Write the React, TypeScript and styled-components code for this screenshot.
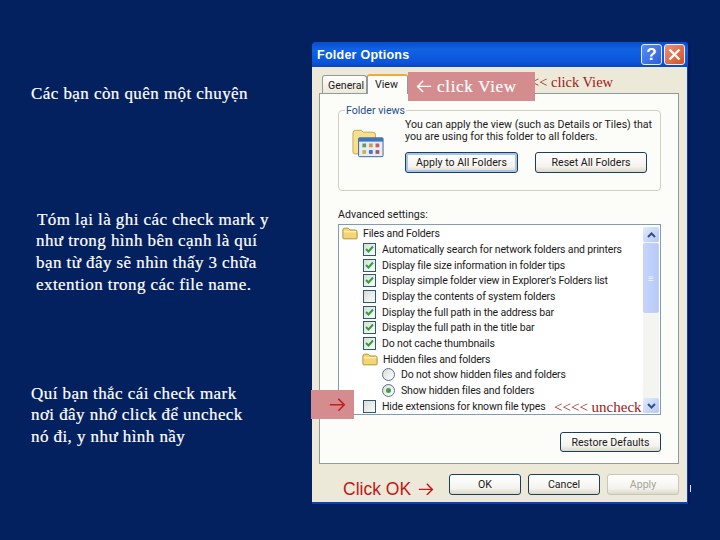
import React from 'react'
import styled, { createGlobalStyle } from 'styled-components'

const GlobalStyle = createGlobalStyle`
  html, body { margin: 0; padding: 0; background: #03205f; }
`

const Page = styled.div`
  width: 720px;
  height: 540px;
  overflow: hidden;
  display: flex;
  background: #03205f;
`

const LeftColumn = styled.div`
  width: 312px;
  flex: none;
  display: flex;
  flex-direction: column;
  padding: 83px 0 0 31px;
  box-sizing: border-box;
  font-family: "Liberation Serif", serif;
  font-size: 17px;
  line-height: 21.7px;
  color: #fff;
  letter-spacing: 0.43px;
  -webkit-text-stroke: 0.2px #fff;
`

const Para = styled.p<{ $top: number; $indent?: number }>`
  margin: ${p => p.$top}px 0 0 ${p => p.$indent ?? 0}px;
  white-space: pre-line;
`

const Window = styled.div`
  position: relative;
  margin-top: 42px;
  width: 378px;
  height: 462px;
  flex: none;
  display: flex;
  flex-direction: column;
  box-sizing: border-box;
  background: #0b3fb8;
  border-right: 2px solid #03165f;
  border-radius: 4px 4px 0 0;
  font-family: Roboto, "Liberation Sans", sans-serif;
  font-size: 10.6px;
  color: #1a1a1a;
`

const TitleBar = styled.div`
  height: 25px;
  flex: none;
  display: flex;
  align-items: center;
  padding: 0 3px 0 5px;
  gap: 2px;
  background: linear-gradient(#0a4ccc, #1162e4 30%, #0b55da 80%, #0a47c0);
  border-radius: 4px 4px 0 0;
`

const Title = styled.span`
  flex: 1;
  font-family: "Liberation Sans", sans-serif;
  font-weight: bold;
  font-size: 12.5px;
  color: #fff;
  letter-spacing: 0.25px;
`

const CapButton = styled.div<{ $close?: boolean }>`
  width: 21px;
  height: 21px;
  box-sizing: border-box;
  border: 1px solid #e8eefc;
  border-radius: 3px;
  display: flex;
  align-items: center;
  justify-content: center;
  color: #fff;
  font-family: "Liberation Sans", sans-serif;
  font-weight: bold;
  font-size: 17px;
  background: ${p => (p.$close ? 'linear-gradient(135deg, #e8937a, #d4501f)' : 'linear-gradient(135deg, #5a8cf0, #2a5fdc)')};
`

const Body = styled.div`
  flex: 1;
  margin: 0 1px 2px 0;
  padding: 6px 8px 0 7px;
  background: #ece9d8;
  display: flex;
  flex-direction: column;
  min-height: 0;
`

const Tabs = styled.div`
  height: 20px;
  flex: none;
  display: flex;
  align-items: flex-end;
  padding-left: 3px;
`

const Tab = styled.div<{ $active?: boolean }>`
  box-sizing: border-box;
  height: ${p => (p.$active ? 20 : 18)}px;
  padding: ${p => (p.$active ? '2px 0 0 7px' : '3px 0 0 5px')};
  width: ${p => (p.$active ? 41 : 45)}px;
  border: 1px solid #919b9c;
  border-bottom: none;
  border-radius: 3px 3px 0 0;
  background: ${p => (p.$active ? '#fcfcf9' : 'linear-gradient(#fff, #ece9d8)')};
  border-top: ${p => (p.$active ? '2px solid #f2a83a' : '1px solid #919b9c')};
  margin-bottom: ${p => (p.$active ? -1 : 0)}px;
  position: relative;
  white-space: nowrap;
`

const Panel = styled.div`
  height: 371px;
  flex: none;
  box-sizing: border-box;
  border: 1px solid #919b9c;
  background: #fcfcf9;
  padding: 11px 17px 0 18px;
  display: flex;
  flex-direction: column;
`

const Group = styled.fieldset`
  margin: 0;
  height: 86px;
  flex: none;
  box-sizing: border-box;
  border: 1px solid #d0d0bf;
  border-radius: 4px;
  padding: 0 0 0 13px;
  display: flex;
  gap: 21px;
  min-width: 0;
`

const Legend = styled.legend`
  margin-left: -7px;
  padding: 0 1px;
  color: #1c4f8c;
  line-height: 11px;
`

const GroupIcon = styled.div`
  padding-top: 12px;
  flex: none;
`

const GroupMain = styled.div`
  display: flex;
  flex-direction: column;
`

const GroupText = styled.div`
  line-height: 12px;
  margin-top: 3px;
  white-space: nowrap;
`

const GroupButtons = styled.div`
  display: flex;
  gap: 17px;
  margin-top: 9px;
`

const Btn = styled.div<{ $w: number; $h?: number; $default?: boolean; $disabled?: boolean }>`
  width: ${p => p.$w}px;
  height: ${p => p.$h ?? 21}px;
  box-sizing: border-box;
  flex: none;
  border: 1px solid ${p => (p.$disabled ? '#c9c7ba' : '#1a3f5c')};
  border-radius: 3px;
  display: flex;
  align-items: center;
  justify-content: center;
  background: linear-gradient(#fff, #f4f3ee 70%, #dcd8c8);
  color: ${p => (p.$disabled ? '#a6a594' : '#1a1a1a')};
  box-shadow: ${p => (p.$default ? 'inset 0 0 0 2px #a9c4ea' : 'none')};
`

const AdvLabel = styled.div`
  margin-top: 17px;
  line-height: 13px;
`

const List = styled.div`
  position: relative;
  margin-top: 3px;
  height: 191px;
  flex: none;
  box-sizing: border-box;
  border: 1px solid #7f9db9;
  background: #fff;
  padding: 1px 0 0 0;
  overflow: hidden;
  display: flex;
`

const Rows = styled.div`
  flex: 1;
  display: flex;
  flex-direction: column;
  white-space: nowrap;
  font-size: 10.5px;
  letter-spacing: -0.15px;
`

const Row = styled.div<{ $level: number }>`
  height: 15.7px;
  display: flex;
  align-items: center;
  gap: 6px;
  padding-left: ${p => p.$level}px;
`

const Scrollbar = styled.div`
  width: 16px;
  flex: none;
  margin: 1px 1px 1px 0;
  display: flex;
  flex-direction: column;
  gap: 1px;
  background: #f4f4f0;
`

const ScrollArrow = styled.div`
  height: 15px;
  flex: none;
  border-radius: 2px;
  background: linear-gradient(135deg, #e2ebfe, #b4c8f6);
  display: flex;
  align-items: center;
  justify-content: center;
`

const ScrollThumb = styled.div`
  height: 70px;
  flex: none;
  box-sizing: border-box;
  border: 1px solid #c2d1f5;
  border-radius: 2px;
  background: linear-gradient(90deg, #c5d5fb, #b7c9f7);
  display: flex;
  align-items: center;
  justify-content: center;
  color: #eef3ff;
  font-size: 10px;
`

const ScrollTrack = styled.div`
  flex: 1;
`

const Box = styled.span`
  width: 13px;
  height: 13px;
  flex: none;
  box-sizing: border-box;
  border: 1px solid #2a5a7a;
  background: linear-gradient(135deg, #dcdcd6, #fbfbf9);
  display: flex;
  align-items: center;
  justify-content: center;
`

const Radio = styled.span<{ $on?: boolean }>`
  width: 13px;
  height: 13px;
  flex: none;
  box-sizing: border-box;
  border: 1px solid #5a6f88;
  border-radius: 50%;
  background: linear-gradient(135deg, #dcdcd6, #fff);
  display: flex;
  align-items: center;
  justify-content: center;
  &::after {
    content: '';
    width: 5px;
    height: 5px;
    border-radius: 50%;
    background: ${p => (p.$on ? '#3fa14a' : 'transparent')};
  }
`

const RestoreRow = styled.div`
  display: flex;
  justify-content: flex-end;
  margin-top: 17px;
`

const Footer = styled.div`
  flex: 1;
  display: flex;
  align-items: flex-start;
  gap: 7px;
  padding: 10px 0 0 130px;
`

const Overlay = styled.div<{ $x: number; $y: number; $w: number; $h: number }>`
  position: absolute;
  left: ${p => p.$x}px;
  top: ${p => p.$y}px;
  width: ${p => p.$w}px;
  height: ${p => p.$h}px;
  display: flex;
  align-items: center;
`

const PinkBox = styled(Overlay)<{ $pad: number }>`
  box-sizing: border-box;
  padding-left: ${p => p.$pad}px;
  background: #d48c8f;
  color: #fff;
  font-family: "Liberation Serif", serif;
  font-size: 17px;
  letter-spacing: 0.7px;
  -webkit-text-stroke: 0.2px #fff;
  gap: 5px;
`

const RedNote = styled(Overlay)<{ $size: number }>`
  color: #a01818;
  font-family: "Liberation Serif", serif;
  font-size: ${p => p.$size}px;
  white-space: nowrap;
`

const ClickOk = styled(Overlay)`
  color: #c01818;
  font-family: "Liberation Sans", sans-serif;
  font-size: 17.5px;
  white-space: nowrap;
  gap: 7px;
`

const EdgeMark = styled(Overlay)`
  background: #dfe6f4;
`

const Arrow = ({ color, dir = 'right', size = 16 }: { color: string; dir?: 'left' | 'right'; size?: number }) => (
  <svg width={size} height={size * 0.8} viewBox="0 0 20 16" fill="none" stroke={color} strokeWidth="1.8">
    {dir === 'right' ? <path d="M1 8h17M11 1l7 7-7 7" /> : <path d="M19 8H2M9 1L2 8l7 7" />}
  </svg>
)

const Check = () => (
  <svg width="9" height="9" viewBox="0 0 9 9" fill="none" stroke="#2f9e3f" strokeWidth="2">
    <path d="M1 4l2.5 2.5L8 1.5" />
  </svg>
)

const Folder = () => (
  <svg width="16" height="13" viewBox="0 0 18 14" style={{ flex: 'none', marginRight: -1 }}>
    <path d="M1 3q0-2 2-2h4l2 2h6q2 0 2 2v7q0 1-1 1H2q-1 0-1-1z" fill="#f3d572" stroke="#a98a2e" />
    <path d="M2 5h14" stroke="#fff2b8" strokeWidth="1.5" />
  </svg>
)

const FolderViewsIcon = () => (
  <svg width="32" height="31" viewBox="0 0 34 32">
    <path d="M1 5q0-3 3-3h6l2 2h10q3 0 3 3v20H3q-2 0-2-2z" fill="#f6e08e" stroke="#c2a54a" />
    <rect x="7" y="10" width="26" height="20" rx="1" fill="#e6edf8" stroke="#3d5f8c" />
    <rect x="7" y="10" width="26" height="4" fill="#3f74c0" />
    <rect x="11" y="16" width="4" height="4" fill="#5aa05a" />
    <rect x="18" y="16" width="4" height="4" fill="#d29a4a" />
    <rect x="25" y="16" width="4" height="4" fill="#c8605a" />
    <rect x="11" y="23" width="4" height="4" fill="#c9b24a" />
    <rect x="18" y="23" width="4" height="4" fill="#4a6fc0" />
    <rect x="25" y="23" width="4" height="4" fill="#a05a5a" />
  </svg>
)

const Chevron = ({ up }: { up?: boolean }) => (
  <svg width="9" height="6" viewBox="0 0 9 6" fill="none" stroke="#34507f" strokeWidth="2">
    <path d={up ? 'M1 5l3.5-3.5L8 5' : 'M1 1l3.5 3.5L8 1'} />
  </svg>
)

const CloseX = () => (
  <svg width="13" height="13" viewBox="0 0 13 13" fill="none" stroke="#fff" strokeWidth="2.4">
    <path d="M1.5 1.5l10 10M11.5 1.5l-10 10" />
  </svg>
)

type Item = { kind: 'folder' | 'check' | 'box' | 'radio' | 'radioOn'; label: string; level: number }

const items: Item[] = [
  { kind: 'folder', label: 'Files and Folders', level: 3 },
  { kind: 'check', label: 'Automatically search for network folders and printers', level: 24 },
  { kind: 'check', label: 'Display file size information in folder tips', level: 24 },
  { kind: 'check', label: "Display simple folder view in Explorer's Folders list", level: 24 },
  { kind: 'box', label: 'Display the contents of system folders', level: 24 },
  { kind: 'check', label: 'Display the full path in the address bar', level: 24 },
  { kind: 'check', label: 'Display the full path in the title bar', level: 24 },
  { kind: 'check', label: 'Do not cache thumbnails', level: 24 },
  { kind: 'folder', label: 'Hidden files and folders', level: 23 },
  { kind: 'radio', label: 'Do not show hidden files and folders', level: 43 },
  { kind: 'radioOn', label: 'Show hidden files and folders', level: 43 },
  { kind: 'box', label: 'Hide extensions for known file types', level: 24 },
]

const Marker = ({ kind }: { kind: Item['kind'] }) => {
  if (kind === 'folder') return <Folder />
  if (kind === 'radio') return <Radio />
  if (kind === 'radioOn') return <Radio $on />
  return <Box>{kind === 'check' && <Check />}</Box>
}

export default function App() {
  return (
    <Page>
      <GlobalStyle />
      <LeftColumn>
        <Para $top={0}>Các bạn còn quên một chuyện</Para>
        <Para $top={104} $indent={6}>Tóm lại là ghi các check mark y</Para>
        <Para $top={0} $indent={5}>{'như trong hình bên cạnh là quí\nbạn từ đây sẽ nhìn thấy 3 chữa\nextention trong các file name.'}</Para>
        <Para $top={87}>{'Quí bạn thắc cái check mark\nnơi đây nhớ click để uncheck\nnó đi, y như hình nầy'}</Para>
      </LeftColumn>
      <Window>
        <TitleBar>
          <Title>Folder Options</Title>
          <CapButton>?</CapButton>
          <CapButton $close><CloseX /></CapButton>
        </TitleBar>
        <Body>
          <Tabs>
            <Tab>General</Tab>
            <Tab $active>View</Tab>
          </Tabs>
          <Panel>
            <Group>
              <Legend>Folder views</Legend>
              <GroupIcon><FolderViewsIcon /></GroupIcon>
              <GroupMain>
                <GroupText>
                  You can apply the view (such as Details or Tiles) that<br />
                  you are using for this folder to all folders.
                </GroupText>
                <GroupButtons>
                  <Btn $w={113} $default>Apply to All Folders</Btn>
                  <Btn $w={112}>Reset All Folders</Btn>
                </GroupButtons>
              </GroupMain>
            </Group>
            <AdvLabel>Advanced settings:</AdvLabel>
            <List>
              <Rows>
                {items.map(item => (
                  <Row key={item.label} $level={item.level}>
                    <Marker kind={item.kind} />
                    {item.label}
                  </Row>
                ))}
              </Rows>
              <Scrollbar>
                <ScrollArrow><Chevron up /></ScrollArrow>
                <ScrollThumb>≡</ScrollThumb>
                <ScrollTrack />
                <ScrollArrow><Chevron /></ScrollArrow>
              </Scrollbar>
            </List>
            <RestoreRow>
              <Btn $w={101} $h={20}>Restore Defaults</Btn>
            </RestoreRow>
          </Panel>
          <Footer>
            <Btn $w={72}>OK</Btn>
            <Btn $w={72}>Cancel</Btn>
            <Btn $w={72} $disabled>Apply</Btn>
          </Footer>
        </Body>
        <RedNote $x={219} $y={31} $w={90} $h={18} $size={14.5}>&lt;&lt; click View</RedNote>
        <PinkBox $x={96} $y={30} $w={127} $h={29} $pad={8}>
          <Arrow color="#fff" dir="left" />
          click View
        </PinkBox>
        <PinkBox $x={-1} $y={348} $w={43} $h={29} $pad={18}>
          <Arrow color="#c02020" size={17} />
        </PinkBox>
        <RedNote $x={242} $y={356} $w={90} $h={18} $size={15}>&lt;&lt;&lt;&lt; uncheck</RedNote>
        <ClickOk $x={31} $y={437} $w={105} $h={20}>
          Click OK <Arrow color="#c01818" />
        </ClickOk>
        <EdgeMark $x={378} $y={443} $w={1} $h={7} />
      </Window>
    </Page>
  )
}
